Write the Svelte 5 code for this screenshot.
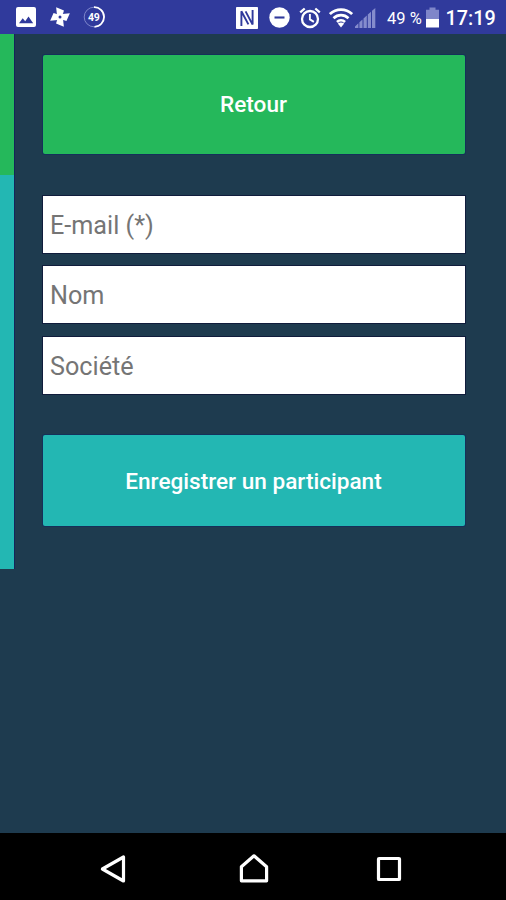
<script lang="ts">
  let fields = $state([
    { name: "email", type: "email", label: "E-mail (*)", value: "" },
    { name: "nom", type: "text", label: "Nom", value: "" },
    { name: "societe", type: "text", label: "Société", value: "" },
  ]);

  const battery = 49;
</script>

<div class="screen">
  <header class="status">
    <svg class="picture" width="20" height="20" viewBox="0 0 20 20">
      <rect width="20" height="20" rx="2" fill="#fff" />
      <path d="M3 16.2 6.7 11.2 9.2 14.2 12.5 9.6 17.2 16.2z" fill="#303a9c" />
    </svg>
    <svg class="pinwheel" width="22" height="22" viewBox="0 0 22 22" fill="#fff">
      <g transform="rotate(-6 11 11)">
        <path d="M8.2 11V.8L15.6 5 13 11z" />
        <path d="M11 8.2H21.2L17 15.6 11 13z" />
        <path d="M13.8 11V21.2L6.4 17 9 11z" />
        <path d="M11 13.8H.8L5 6.4 11 9z" />
      </g>
      <circle cx="11" cy="11" r="1.5" fill="#303a9c" />
    </svg>
    <svg class="ring" width="22" height="22" viewBox="0 0 22 22">
      <circle cx="11" cy="11" r="9.8" fill="none" stroke="#7d85cb" stroke-width="1" />
      <path d="M11 1.2A9.8 9.8 0 0 1 11.5 20.8" fill="none" stroke="#fff" stroke-width="1.8" />
      <text x="10.8" y="14.7" text-anchor="middle">{battery}</text>
    </svg>

    <div class="system">
      <svg class="nfc" width="22" height="22" viewBox="0 0 22 22">
        <rect width="22" height="22" rx=".8" fill="#fff" />
        <path d="M5.4 19V4.2L12.4 17.4M16.6 3V17.6L9.6 4.4" fill="none" stroke="#303a9c" stroke-width="1.9" />
      </svg>
      <svg class="dnd" width="21" height="21" viewBox="0 0 21 21">
        <circle cx="10.5" cy="10.5" r="10.2" fill="#fff" />
        <path d="M5.5 10.5h10" stroke="#303a9c" stroke-width="2.1" />
      </svg>
      <svg class="alarm" width="22" height="22" viewBox="0 0 22 22" fill="none" stroke="#fff">
        <circle cx="11" cy="12" r="8" stroke-width="2.3" />
        <path d="M1.2 5.4 5.7 1.5M16.3 1.5 20.8 5.4" stroke-width="2.3" />
        <path d="M10.9 7v5.4l4 2.5" stroke-width="1.9" />
      </svg>
      <svg class="wifi" width="24" height="20" viewBox="0 0 24 20" fill="none" stroke="#fff" stroke-width="2.7">
        <path d="M.9 6.1C7.2.1 16.8.1 23.1 6.1" />
        <path d="M4.5 10.2C8.8 6.1 15.2 6.1 19.5 10.2" />
        <path d="M8 14.1C10.3 11.9 13.7 11.9 16 14.1" />
        <path d="M8.8 15.6Q12 13.4 15.2 15.6L12 19.4z" fill="#fff" stroke="none" />
      </svg>
      <svg class="signal" width="21" height="20" viewBox="0 0 21 20" fill="#858ccd">
        <path d="M0 20V18.5L3.4 15.3V20zM4.4 20V14.3L7.5 11.5V20zM8.5 20V10.6L11.8 7.6V20zM12.8 20V6.6L16 3.7V20zM17 20V2.8L20.3 0V20z" />
      </svg>
      <span class="level">{battery} %</span>
      <svg class="battery" width="13" height="21" viewBox="0 0 13 21">
        <path d="M0 2.8H3.5V.5H9.5V2.8H13V12H0z" fill="#7f86c9" />
        <path d="M0 12H13V20.5H0z" fill="#fff" />
      </svg>
      <span class="clock">17:19</span>
    </div>
  </header>

  <main>
    <div class="edge">
      <div class="edge-top"></div>
      <div class="edge-rest"></div>
    </div>

    <form onsubmit={(e) => e.preventDefault()}>
      <button class="btn back" type="button">Retour</button>

      <div class="fields">
        {#each fields as field (field.name)}
          <input
            type={field.type}
            name={field.name}
            placeholder={field.label}
            bind:value={field.value}
          />
        {/each}
      </div>

      <button class="btn submit" type="submit">Enregistrer un participant</button>
    </form>
  </main>

  <nav>
    <button aria-label="Précédent">
      <svg width="26" height="30" viewBox="0 0 26 30">
        <path d="M2.4 15 23.5 3V27z" />
      </svg>
    </button>
    <button aria-label="Accueil">
      <svg width="30" height="30" viewBox="0 0 30 30">
        <path d="M2.4 26.8V12.8L15 1.8 27.6 12.8V26.8z" />
      </svg>
    </button>
    <button aria-label="Applications récentes">
      <svg width="26" height="26" viewBox="0 0 26 26">
        <rect x="2.5" y="2.5" width="21" height="21" rx=".6" />
      </svg>
    </button>
  </nav>
</div>

<style>
  :global(body) {
    margin: 0;
    background: #1e3b4f;
  }

  .screen {
    display: flex;
    flex-direction: column;
    width: 506px;
    height: 900px;
    overflow: hidden;
    background: #1e3b4f;
    font-family: Roboto, "Liberation Sans", sans-serif;
  }

  .status {
    display: flex;
    align-items: center;
    flex: none;
    box-sizing: border-box;
    height: 34px;
    padding: 0 0 0 16px;
    background: #303a9c;
    color: #fff;
  }
  .status svg {
    display: block;
    flex: none;
  }
  .pinwheel {
    margin-left: 13px;
  }
  .ring {
    margin-left: 12px;
  }
  .ring text {
    font-size: 10.5px;
    font-weight: 700;
    letter-spacing: -0.3px;
    fill: #fff;
  }
  .system {
    display: flex;
    align-items: center;
    width: 270px;
    height: 34px;
    padding-top: 1px;
    box-sizing: border-box;
    margin-left: auto;
  }
  .dnd {
    margin-left: 11px;
  }
  .alarm {
    margin-left: 9px;
  }
  .wifi {
    margin-left: 8px;
  }
  .signal {
    margin-left: 2px;
  }
  .level {
    flex: none;
    width: 39px;
    margin-left: 11px;
    padding-top: 1px;
    font-size: 16.5px;
    white-space: nowrap;
  }
  .clock {
    margin-left: 6.5px;
    padding-top: 1px;
    font-size: 19.8px;
    font-weight: 500;
  }

  main {
    display: flex;
    flex: 1;
    align-items: flex-start;
  }
  .edge {
    flex: none;
    width: 15px;
    box-sizing: border-box;
    border-right: 1px solid #15245a;
  }
  .edge-top {
    height: 141px;
    background: #25b85b;
  }
  .edge-rest {
    height: 394px;
    background: #23b7b3;
  }

  form {
    width: 422px;
    margin: 21px 0 0 27.5px;
  }
  .btn {
    display: block;
    width: 100%;
    padding: 0;
    border: 0;
    border-radius: 2px;
    box-shadow: 0 0 0 1px #15305a;
    color: #fff;
    font-family: inherit;
    font-size: 22.6px;
    font-weight: 500;
    cursor: pointer;
  }
  .back {
    height: 98.5px;
    padding-top: 1px;
    background: #25b85b;
  }
  .submit {
    height: 91px;
    padding-top: 1px;
    background: #23b7b3;
  }

  .fields {
    display: flex;
    flex-direction: column;
    gap: 13.5px;
    margin: 42px 0 41.5px;
  }
  input {
    box-sizing: border-box;
    width: 100%;
    height: 57px;
    padding: 2px 8px 0 7.5px;
    border: 0;
    border-radius: 0;
    box-shadow: 0 0 0 1px #101c3c;
    background: #fff;
    color: #222;
    font-family: inherit;
    font-size: 25.2px;
    outline: none;
  }
  input::placeholder {
    color: #757575;
    opacity: 1;
  }

  nav {
    display: flex;
    align-items: center;
    gap: 113px;
    flex: none;
    box-sizing: border-box;
    height: 67px;
    padding: 5px 0 0 100px;
    background: #000;
  }
  nav button {
    padding: 0;
    border: 0;
    background: none;
  }
  nav button:last-child {
    margin-left: -6px;
  }
  nav svg {
    display: block;
    fill: none;
    stroke: #fff;
    stroke-width: 3.2;
    stroke-linejoin: round;
  }
</style>
